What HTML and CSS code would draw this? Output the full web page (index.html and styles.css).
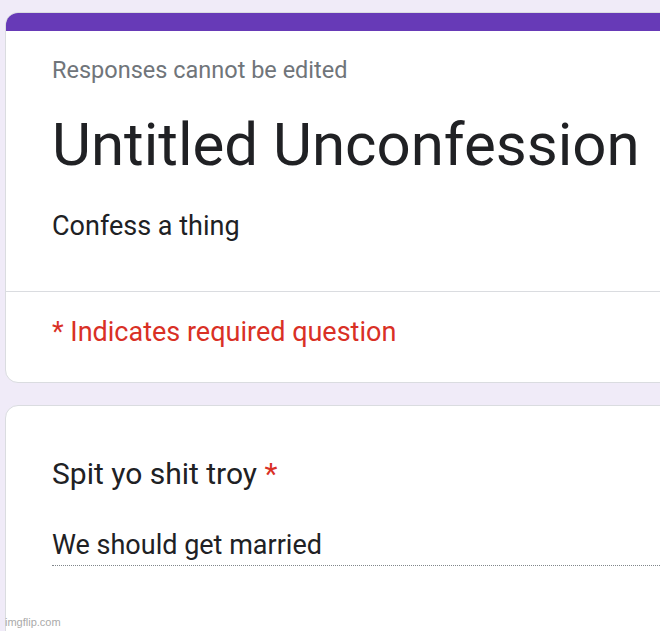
FILE: index.html
```html
<!DOCTYPE html>
<html>
<head>
<meta charset="utf-8">
<link rel="stylesheet" href="styles.css">
</head>
<body>
<div class="page">
  <div class="card header-card">
    <div class="band"></div>
    <div class="header-body">
      <div class="notice">Responses cannot be edited</div>
      <h1 class="title">Untitled Unconfession</h1>
      <div class="desc">Confess a thing</div>
    </div>
    <div class="divider"></div>
    <div class="required">* Indicates required question</div>
  </div>
  <div class="card question-card">
    <div class="question">Spit yo shit troy <span class="star">*</span></div>
    <div class="answer">We should get married</div>
  </div>
</div>
<div class="watermark">imgflip.com</div>
</body>
</html>
```

FILE: styles.css
```css
html, body {
  margin: 0;
  padding: 0;
  background: #f0ebf8;
  font-family: Roboto, "Liberation Sans", Arial, sans-serif;
  overflow: hidden;
}
.page {
  padding: 12px 0 0 5px;
  width: 700px;
  display: flex;
  flex-direction: column;
  gap: 22px;
}
.card {
  background: #fff;
  border: 1px solid #dadce0;
  border-radius: 13px;
  overflow: hidden;
}
.band {
  height: 19px;
  background: #673ab7;
  margin: -1px -1px 0 -1px;
}
.header-body {
  padding: 25px 0 0 46px;
}
.notice {
  font-size: 23.5px;
  line-height: 28px;
  color: #70757a;
}
.title {
  margin: 0;
  font-weight: 400;
  font-size: 60px;
  line-height: 70px;
  color: #202124;
  padding-top: 26px;
}
.desc {
  font-size: 27px;
  line-height: 32px;
  color: #202124;
  padding-top: 30px;
}
.divider {
  margin-top: 49px;
  height: 1px;
  background: #dadce0;
}
.required {
  font-size: 27px;
  line-height: 32px;
  color: #d93025;
  padding: 24px 0 34px 46px;
}
.question-card {
  padding: 50px 0 60px 46px;
  min-height: 200px;
}
.question {
  font-size: 30px;
  line-height: 36px;
  color: #202124;
}
.star {
  color: #d93025;
}
.answer {
  margin-top: 37px;
  font-size: 27px;
  line-height: 32px;
  color: #202124;
  padding-bottom: 4px;
  border-bottom: 1px dotted #80868b;
}
.watermark {
  position: absolute;
  left: 5px;
  bottom: 3px;
  font-family: "Liberation Sans", Arial, sans-serif;
  font-size: 11px;
  color: #aaa;
}
```
